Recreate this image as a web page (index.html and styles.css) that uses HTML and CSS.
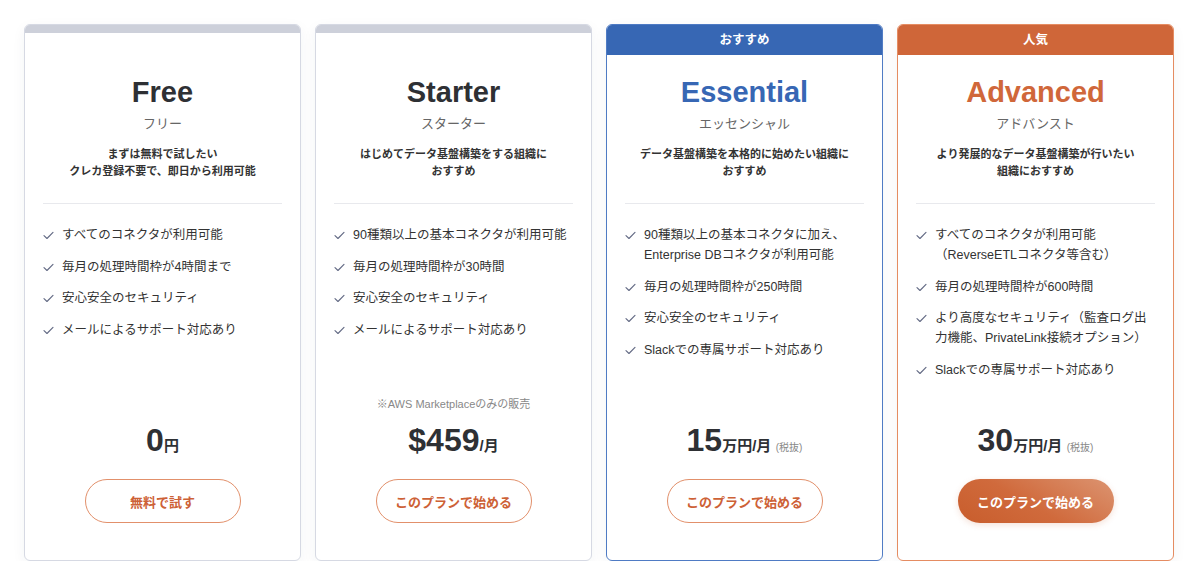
FILE: index.html
```html
<!DOCTYPE html>
<html lang="ja">
<head>
<meta charset="utf-8">
<title>Pricing</title>
<link rel="stylesheet" href="styles.css">
</head>
<body>
<div class="plans">
  <div class="card card--free">
    <div class="card-bar"></div>
    <h2 class="plan-name">Free</h2>
    <p class="plan-kana">フリー</p>
    <p class="plan-desc">まずは無料で試したい<br>クレカ登録不要で、即日から利用可能</p>
    <hr class="divider">
    <ul class="features">
      <li><svg class="check" viewBox="0 0 12 10"><path d="M1 5.2 L4.3 8.3 L11 1.5"/></svg><span>すべてのコネクタが利用可能</span></li>
      <li><svg class="check" viewBox="0 0 12 10"><path d="M1 5.2 L4.3 8.3 L11 1.5"/></svg><span>毎月の処理時間枠が4時間まで</span></li>
      <li><svg class="check" viewBox="0 0 12 10"><path d="M1 5.2 L4.3 8.3 L11 1.5"/></svg><span>安心安全のセキュリティ</span></li>
      <li><svg class="check" viewBox="0 0 12 10"><path d="M1 5.2 L4.3 8.3 L11 1.5"/></svg><span>メールによるサポート対応あり</span></li>
    </ul>
    <div class="card-foot">
      <p class="price"><span class="num">0</span><span class="unit">円</span></p>
      <a class="btn">無料で試す</a>
    </div>
  </div>

  <div class="card card--free">
    <div class="card-bar"></div>
    <h2 class="plan-name">Starter</h2>
    <p class="plan-kana">スターター</p>
    <p class="plan-desc">はじめてデータ基盤構築をする組織に<br>おすすめ</p>
    <hr class="divider">
    <ul class="features">
      <li><svg class="check" viewBox="0 0 12 10"><path d="M1 5.2 L4.3 8.3 L11 1.5"/></svg><span>90種類以上の基本コネクタが利用可能</span></li>
      <li><svg class="check" viewBox="0 0 12 10"><path d="M1 5.2 L4.3 8.3 L11 1.5"/></svg><span>毎月の処理時間枠が30時間</span></li>
      <li><svg class="check" viewBox="0 0 12 10"><path d="M1 5.2 L4.3 8.3 L11 1.5"/></svg><span>安心安全のセキュリティ</span></li>
      <li><svg class="check" viewBox="0 0 12 10"><path d="M1 5.2 L4.3 8.3 L11 1.5"/></svg><span>メールによるサポート対応あり</span></li>
    </ul>
    <div class="card-foot">
      <p class="note">※AWS Marketplaceのみの販売</p>
      <p class="price"><span class="num">$459</span><span class="unit">/月</span></p>
      <a class="btn">このプランで始める</a>
    </div>
  </div>

  <div class="card card--essential">
    <div class="card-badge">おすすめ</div>
    <h2 class="plan-name">Essential</h2>
    <p class="plan-kana">エッセンシャル</p>
    <p class="plan-desc">データ基盤構築を本格的に始めたい組織に<br>おすすめ</p>
    <hr class="divider">
    <ul class="features">
      <li><svg class="check" viewBox="0 0 12 10"><path d="M1 5.2 L4.3 8.3 L11 1.5"/></svg><span>90種類以上の基本コネクタに加え、Enterprise DBコネクタが利用可能</span></li>
      <li><svg class="check" viewBox="0 0 12 10"><path d="M1 5.2 L4.3 8.3 L11 1.5"/></svg><span>毎月の処理時間枠が250時間</span></li>
      <li><svg class="check" viewBox="0 0 12 10"><path d="M1 5.2 L4.3 8.3 L11 1.5"/></svg><span>安心安全のセキュリティ</span></li>
      <li><svg class="check" viewBox="0 0 12 10"><path d="M1 5.2 L4.3 8.3 L11 1.5"/></svg><span>Slackでの専属サポート対応あり</span></li>
    </ul>
    <div class="card-foot">
      <p class="price"><span class="num">15</span><span class="unit">万円/月</span> <span class="tax">(税抜)</span></p>
      <a class="btn">このプランで始める</a>
    </div>
  </div>

  <div class="card card--advanced">
    <div class="card-badge">人気</div>
    <h2 class="plan-name">Advanced</h2>
    <p class="plan-kana">アドバンスト</p>
    <p class="plan-desc">より発展的なデータ基盤構築が行いたい<br>組織におすすめ</p>
    <hr class="divider">
    <ul class="features">
      <li><svg class="check" viewBox="0 0 12 10"><path d="M1 5.2 L4.3 8.3 L11 1.5"/></svg><span>すべてのコネクタが利用可能<br>（ReverseETLコネクタ等含む）</span></li>
      <li><svg class="check" viewBox="0 0 12 10"><path d="M1 5.2 L4.3 8.3 L11 1.5"/></svg><span>毎月の処理時間枠が600時間</span></li>
      <li><svg class="check" viewBox="0 0 12 10"><path d="M1 5.2 L4.3 8.3 L11 1.5"/></svg><span>より高度なセキュリティ（監査ログ出力機能、PrivateLink接続オプション）</span></li>
      <li><svg class="check" viewBox="0 0 12 10"><path d="M1 5.2 L4.3 8.3 L11 1.5"/></svg><span>Slackでの専属サポート対応あり</span></li>
    </ul>
    <div class="card-foot">
      <p class="price"><span class="num">30</span><span class="unit">万円/月</span> <span class="tax">(税抜)</span></p>
      <a class="btn btn--filled">このプランで始める</a>
    </div>
  </div>
</div>
</body>
</html>
```

FILE: styles.css
```css
* { box-sizing: border-box; }

html, body {
  margin: 0;
  padding: 0;
  background: #ffffff;
}

body {
  font-family: "Liberation Sans", "Noto Sans CJK JP", sans-serif;
  color: #333333;
}

.plans {
  display: flex;
  gap: 15px;
  padding: 24px 0 0 24px;
}

.card {
  position: relative;
  width: 277px;
  height: 537px;
  display: flex;
  flex-direction: column;
  align-items: stretch;
  padding: 49px 18px 37px;
  border: 1px solid #d6d9e3;
  border-radius: 6px;
  background: #fff;
  overflow: hidden;
  box-shadow: 0 4px 14px rgba(40, 50, 80, 0.05);
}

.plans .card + .card { margin-left: -1px; }

.card-bar {
  position: absolute;
  top: 0;
  left: 0;
  right: 0;
  height: 8px;
  background: #cdd0da;
}

.card-badge {
  position: absolute;
  top: 0;
  left: 0;
  right: 0;
  height: 30px;
  line-height: 31px;
  text-align: center;
  color: #fff;
  font-size: 12.5px;
  font-weight: 700;
}

.card--essential { border-color: #4f7bc4; }
.card--essential .card-badge { background: #3767b4; }
.card--essential .plan-name { color: #3767b4; }

.card--advanced { border-color: #e58c62; }
.card--advanced .card-badge { background: #cf6639; }
.card--advanced .plan-name { color: #d0673a; }

.plan-name {
  margin: 0;
  font-size: 29px;
  line-height: 36px;
  font-weight: 700;
  text-align: center;
  color: #2e3034;
}

.plan-kana {
  margin: 5px 0 0;
  font-size: 13px;
  line-height: 18px;
  text-align: center;
  color: #666;
}

.plan-desc {
  margin: 13px 0 0;
  font-size: 11px;
  line-height: 17px;
  font-weight: 700;
  text-align: center;
  color: #333;
}

.divider {
  margin: 23px 0 0;
  border: 0;
  border-top: 1px solid #e8e9ed;
  height: 0;
}

.features {
  list-style: none;
  margin: 21px 0 0;
  padding: 0;
  display: flex;
  flex-direction: column;
  gap: 11.5px;
}

.features li {
  display: flex;
  align-items: flex-start;
  font-size: 12.5px;
  line-height: 20px;
  color: #333;
}

.check {
  flex: 0 0 auto;
  width: 11px;
  height: 9px;
  margin: 6px 8px 0 0;
  fill: none;
  stroke: #646b85;
  stroke-width: 1.3;
  stroke-linecap: round;
  stroke-linejoin: round;
}

.card-foot {
  margin-top: auto;
  display: flex;
  flex-direction: column;
  align-items: center;
}

.note {
  margin: 0 0 8px;
  font-size: 11px;
  line-height: 16px;
  color: #888;
}

.price {
  margin: 0;
  height: 40px;
  line-height: 40px;
  font-weight: 700;
  color: #2e3034;
  white-space: nowrap;
}

.price .num {
  font-size: 32px;
}

.price .unit {
  font-size: 15px;
}

.price .tax {
  font-size: 10px;
  font-weight: 400;
  color: #888;
}

.btn {
  margin-top: 19px;
  width: 156px;
  height: 44px;
  display: flex;
  align-items: center;
  justify-content: center;
  border: 1px solid #e2906b;
  border-radius: 22px;
  color: #cd6136;
  font-size: 13px;
  font-weight: 700;
  background: #fff;
}

.btn--filled {
  border: 0;
  color: #fff;
  background: linear-gradient(30deg, #c85d2c 0%, #d06a3c 45%, #dc9471 100%);
  box-shadow: 0 2px 6px rgba(200, 95, 45, 0.18);
}
```
